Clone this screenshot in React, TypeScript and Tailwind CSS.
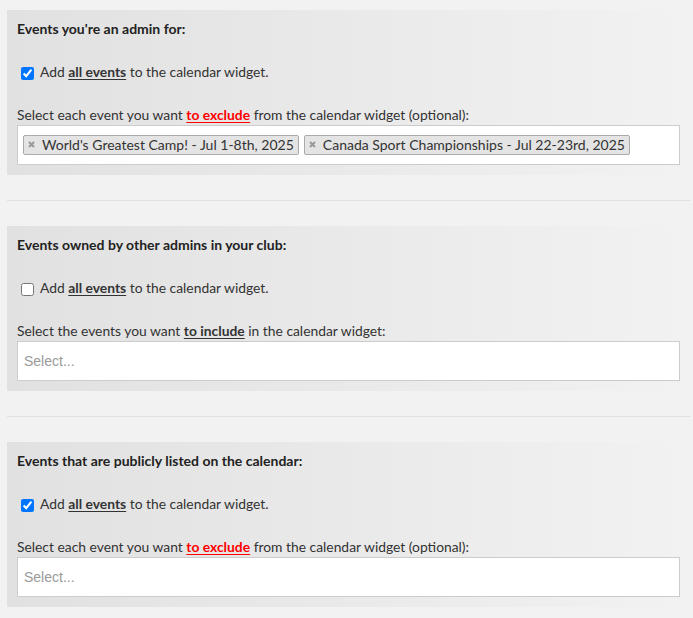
import { ReactNode } from 'react';

type Tag = { id: number; label: string };

function TagSelect({ tags }: { tags: Tag[] }) {
  return (
    <div className="flex h-[40px] items-center border border-[#ccc] bg-white px-[5px]">
      {tags.length === 0 ? (
        <span className="pl-px font-['Liberation_Sans',Arial,sans-serif] text-[14px] text-[#9a9a9a]">Select...</span>
      ) : (
        <div className="flex gap-[5px] pb-px">
          {tags.map((tag) => (
            <span
              key={tag.id}
              className="flex h-[20px] items-center rounded-[2px] border border-[#aaa] bg-[#e4e4e4] pl-[4px] pr-[4px] text-[14px] leading-[18px] text-[#333]"
            >
              <svg width="7" height="7" viewBox="0 0 7 7" className="mr-[7px] shrink-0">
                <path d="M1 1L6 6M6 1L1 6" stroke="#999" strokeWidth="2" strokeLinecap="butt" />
              </svg>
              {tag.label}
            </span>
          ))}
        </div>
      )}
    </div>
  );
}

type SectionProps = { title: string; checked: boolean; label: ReactNode; tags: Tag[] };

function Section({ title, checked, label, tags }: SectionProps) {
  return (
    <section className="bg-gradient-to-r from-[#e1e1e1] to-[#f2f2f2] p-[10px]">
      <h3 className="text-[14px] leading-[17px] font-bold text-[#222]">{title}</h3>
      {/* all events */}
      <label className="mt-[25px] flex h-[20px] items-center text-[13.85px] text-[#333]">
        <input type="checkbox" defaultChecked={checked} className="mt-[2px] mr-[6px] ml-[4px] h-[13px] w-[13px]" />
        <span className="pt-px">
          Add <b className="underline underline-offset-2">all events</b> to the calendar widget.
        </span>
      </label>
      <p className="mt-[22px] text-[13.85px] leading-[21px] text-[#333]">{label}</p>
      <TagSelect tags={tags} />
    </section>
  );
}

const exclude = <b className="text-[#ff0000] underline underline-offset-2">to exclude</b>;

export default function App() {
  return (
    <div className="min-h-[618px] bg-[#f2f2f2] font-['Lato','Noto_Sans',sans-serif]">
      <div className="mr-[3px] ml-[7px] pt-[10px]">
        <Section
          title="Events you're an admin for:"
          checked={true}
          label={<>Select each event you want {exclude} from the calendar widget (optional):</>}
          tags={[
            { id: 1, label: "World's Greatest Camp! - Jul 1-8th, 2025" },
            { id: 2, label: 'Canada Sport Championships - Jul 22-23rd, 2025' },
          ]}
        />
        <hr className="my-[25px] border-t border-[#e0e0e0]" />
        <Section
          title="Events owned by other admins in your club:"
          checked={false}
          label={
            <>
              Select the events you want <b className="underline underline-offset-2">to include</b> in the calendar
              widget:
            </>
          }
          tags={[]}
        />
        <hr className="my-[25px] border-t border-[#e0e0e0]" />
        <Section
          title="Events that are publicly listed on the calendar:"
          checked={true}
          label={<>Select each event you want {exclude} from the calendar widget (optional):</>}
          tags={[]}
        />
      </div>
    </div>
  );
}
